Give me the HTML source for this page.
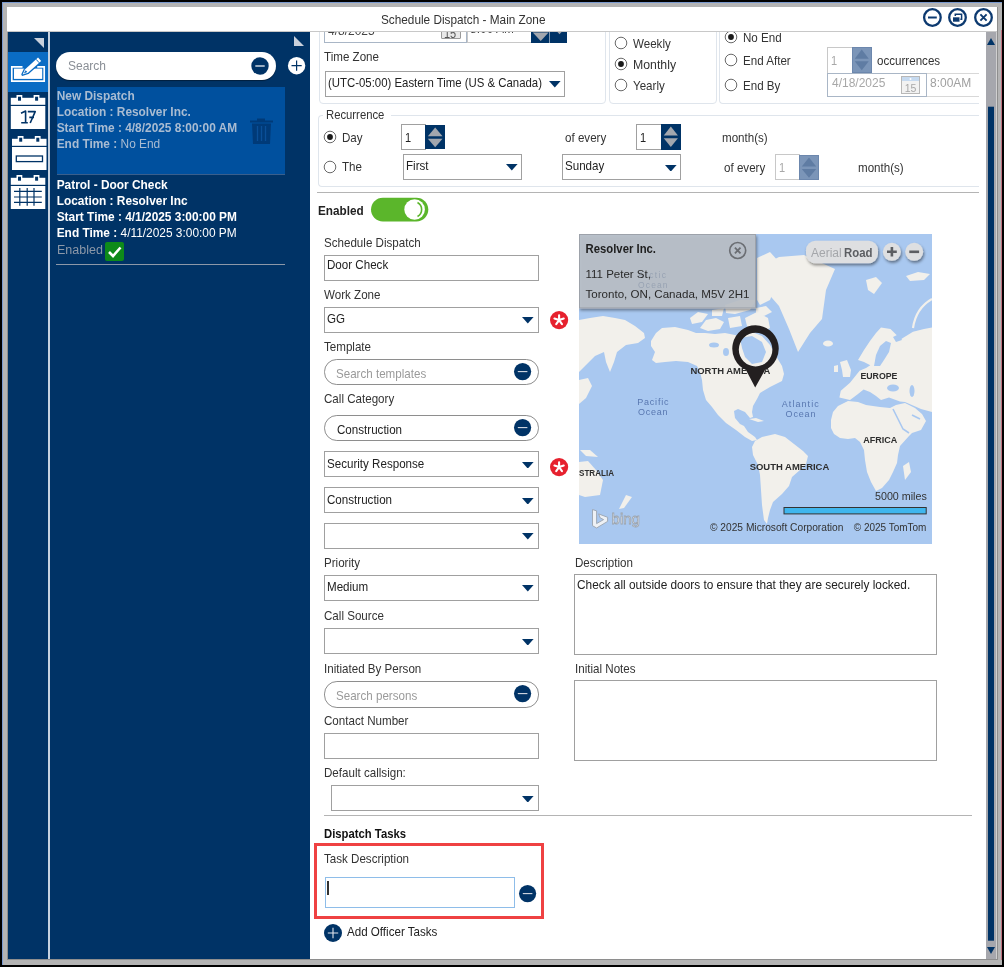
<!DOCTYPE html>
<html><head><meta charset="utf-8">
<style>
*{margin:0;padding:0;box-sizing:border-box}
html,body{width:1004px;height:967px;overflow:hidden;background:#000;will-change:transform;font-family:"Liberation Sans",sans-serif;font-size:12px;color:#222}
.a{position:absolute}
.t{line-height:1;white-space:nowrap}
#frame{left:2px;top:2px;width:1000px;height:963px;background:#b4b4b4;border-top:1px solid #7a9ad0;border-left:1px solid #7a9ad0}
#title{left:7px;top:7px;width:990px;height:25px;background:#fff;border-bottom:1px solid #c8c8c8}
#side{left:8px;top:32px;width:40px;height:927px;background:#003366}
#sep{left:48px;top:32px;width:1.6px;height:927px;background:#c6d2e0}
#list{left:50px;top:32px;width:260px;height:927px;background:#003366}
#content{left:310px;top:32px;width:676px;height:927px;background:#fff;overflow:hidden}
#sb{left:986px;top:32px;width:10px;height:927px;background:#a6a7ad}
#sbl{left:996px;top:32px;width:1px;height:927px;background:#d0d0d0}
.li{font-size:11.9px;line-height:16px;white-space:nowrap}
</style></head><body>
<div id="frame" class="a"></div>
<div class="a" style="left:1001px;top:30px;width:1px;height:930px;background:#c0707e"></div>
<div class="a" style="left:6.5px;top:6.5px;width:991px;height:953px;border:1px solid #8e8e8e"></div>
<div id="title" class="a"></div>
<div class="a t" style="left:381.4px;top:13px;font-size:12.98px;color:#333;transform:scaleX(0.909);transform-origin:0 0">Schedule Dispatch - Main Zone</div>
<svg class="a" style="left:920px;top:7px" width="78" height="24" viewBox="920 7 78 24">
<g fill="none" stroke="#0d3a70" stroke-width="2.3">
<circle cx="932.4" cy="17.5" r="8.3"/><circle cx="957.5" cy="17.5" r="8.3"/><circle cx="983.5" cy="17.5" r="8.3"/>
</g>
<path d="M928,17.5H936.8" stroke="#0d3a70" stroke-width="2"/>
<rect x="953" y="17.3" width="6.5" height="4.4" fill="#0d3a70"/>
<path d="M955.3,16V14.2H961.6V19.2H960.3" fill="none" stroke="#0d3a70" stroke-width="1.5"/>
<path d="M980.4,14.4L986.6,20.6M986.6,14.4L980.4,20.6" stroke="#0d3a70" stroke-width="1.9"/>
</svg>
<div id="side" class="a">
<svg class="a" style="left:0;top:0" width="40" height="180" viewBox="8 32 40 180">
<polygon points="34,38 44,38 44,48" fill="#c9d1dc"/>
<rect x="8" y="52" width="40" height="40" fill="#0a6cc4"/>
<path d="M22.5,66.8 H11.8 V81.1 H44.2 V66.8 H37.2" fill="none" stroke="#fff" stroke-width="1.7"/>
<rect x="14" y="68.6" width="28.2" height="10.3" fill="#fff"/>
<polygon points="22.60,74.60 28.00,72.83 41.14,61.01 38.06,57.59 24.93,69.41" fill="#0a6cc4" stroke="#0a6cc4" stroke-width="2.6" stroke-linejoin="round"/>
<polygon points="22.60,74.60 28.00,72.83 41.14,61.01 38.06,57.59 24.93,69.41" fill="#fff"/>
<path d="M39.21,62.75 L36.13,59.33" stroke="#0a6cc4" stroke-width="1"/>
<polygon points="23.79,73.53 27.27,72.01 25.66,70.23" fill="#0a6cc4"/>
<!-- cal 17 --><rect x="10.8" y="97.8" width="34.5" height="7" fill="#fff"/><rect x="16.5" y="95" width="5.8" height="4" fill="#fff"/><rect x="33.6" y="95" width="5.8" height="4" fill="#fff"/><rect x="18.0" y="96.7" width="3" height="4" fill="#003366"/><rect x="35.1" y="96.7" width="3" height="4" fill="#003366"/><rect x="10.8" y="106" width="34.5" height="23" fill="#fff"/><path d="M21,113.2 L25.6,111 V122.8 M21.2,122.8 H27.8 M27.8,111.6 H35.2 L30.2,123 M29.3,117.4 H34" fill="none" stroke="#003366" stroke-width="1.6" stroke-linejoin="round"/>
<!-- cal bar --><rect x="12" y="138.8" width="34.5" height="7" fill="#fff"/><rect x="17.7" y="136" width="5.8" height="4" fill="#fff"/><rect x="34.8" y="136" width="5.8" height="4" fill="#fff"/><rect x="19.2" y="137.7" width="3" height="4" fill="#003366"/><rect x="36.3" y="137.7" width="3" height="4" fill="#003366"/><rect x="12" y="147" width="34.5" height="23" fill="#fff"/><rect x="16.3" y="156" width="26.2" height="5.6" fill="none" stroke="#003366" stroke-width="1.3"/>
<!-- cal grid --><rect x="10.8" y="177.8" width="34.5" height="7" fill="#fff"/><rect x="16.5" y="175" width="5.8" height="4" fill="#fff"/><rect x="33.6" y="175" width="5.8" height="4" fill="#fff"/><rect x="18.0" y="176.7" width="3" height="4" fill="#003366"/><rect x="35.1" y="176.7" width="3" height="4" fill="#003366"/><rect x="10.8" y="186" width="34.5" height="23" fill="#fff"/><path d="M14,191.4H41.8M14,197H41.8M14,202.3H41.8M19.8,188V205.7M27.2,188V205.7M34,188V205.7" stroke="#003366" stroke-width="1.2"/>
</svg>
</div>
<div id="sep" class="a"></div>
<div id="list" class="a">
<svg class="a" style="left:0;top:0" width="260" height="60" viewBox="50 32 260 60">
<polygon points="294,36 294,46 304,46" fill="#c9d1dc"/>
<circle cx="296.6" cy="65.7" r="8.7" fill="#fff"/>
<path d="M291.5,65.7H301.7M296.6,60.6V70.8" stroke="#003366" stroke-width="1.2"/>
</svg>
<div class="a" style="left:6px;top:20px;width:219.5px;height:28px;background:#fff;border-radius:14px;box-shadow:0 1px 1px rgba(0,0,0,.4)"></div>
<div class="a" style="left:18px;top:27px;font-size:12px;color:#8a8f96">Search</div>
<svg class="a" style="left:201px;top:25px" width="18" height="18" viewBox="0 0 18 18"><circle cx="9" cy="9" r="8.7" fill="#003366"/><path d="M4.3,9H13.7" stroke="#fff" stroke-width="1.2"/></svg>
<div class="a" style="left:6.6px;top:55px;width:228.6px;height:88px;background:#00509e;border-bottom:1px solid #3a5f8c"></div>
<div class="a li" style="left:6.7px;top:56.3px;color:#a9bcd2">
<b>New Dispatch</b><br><b>Location : Resolver Inc.</b><br><b>Start Time : 4/8/2025 8:00:00 AM</b><br><b>End Time :</b> No End
</div>
<svg class="a" style="left:199px;top:85px" width="25" height="28" viewBox="0 0 25 28">
<path d="M8,1.5H16V3.5H8Z M1,3.5H24V5.5H1Z" fill="#003a78"/>
<path d="M3,6.5H22L21,27H4Z" fill="#003a78"/>
<path d="M8.5,9V24M12.5,9V24M16.5,9V24" stroke="#0a4f98" stroke-width="1.3"/>
</svg>
<div class="a li" style="left:6.7px;top:145px;color:#fff">
<b>Patrol - Door Check</b><br><b>Location : Resolver Inc</b><br><b>Start Time : 4/1/2025 3:00:00 PM</b><br><b>End Time :</b> 4/11/2025 3:00:00 PM
</div>
<div class="a" style="left:7px;top:211.5px;color:#8c98a8;font-size:12.5px;line-height:1">Enabled</div>
<div class="a" style="left:55px;top:210px;width:19px;height:19px;background:#0e8a1a;border-radius:2px"></div>
<svg class="a" style="left:55px;top:210px" width="19" height="19" viewBox="0 0 19 19"><path d="M4,10 L8,14 L15.5,5.5" fill="none" stroke="#fff" stroke-width="2.6"/></svg>
<div class="a" style="left:6px;top:232px;width:229px;height:1px;background:#8c98a8"></div>
</div>

<div id="content" class="a"><div class="a" style="left:-310px;top:-32px;width:1004px;height:967px">
<div class="a" style="left:319.00px;top:9.70px;width:287.00px;height:94.30px;border:1px solid #dfe5ec;background:#fff;border-radius:4px"></div>
<div class="a" style="left:609.00px;top:9.70px;width:107.50px;height:94.30px;border:1px solid #dfe5ec;background:#fff;border-radius:4px"></div>
<div class="a" style="left:719.00px;top:9.70px;width:260.00px;height:94.30px;border:1px solid #dfe5ec;background:#fff;border-radius:4px 0 0 4px;border-right:none"></div>
<div class="a" style="left:323.50px;top:13.70px;width:143.00px;height:29.80px;border:1px solid #a9b6c6;background:#fff;"></div>
<div class="a t" style="left:327.60px;top:24.00px;font-size:13.20px;color:#444;transform:scaleX(0.9091);transform-origin:0 0;">4/8/2025</div>
<div class="a" style="left:441.00px;top:23.70px;width:20.00px;height:15.80px;border:1px solid #9a9a9a;background:#e9e9e9;border-radius:1px"></div>
<div class="a t" style="left:444.00px;top:27.50px;font-size:12.10px;color:#555;transform:scaleX(0.9091);transform-origin:0 0;">15</div>
<div class="a" style="left:466.50px;top:13.70px;width:65.00px;height:29.80px;border:1px solid #c8c8c8;background:#fff;"></div>
<div class="a t" style="left:470.00px;top:21.50px;font-size:13.20px;color:#444;transform:scaleX(0.9091);transform-origin:0 0;">8:00 AM</div>
<div class="a" style="left:531.00px;top:14.00px;width:35.50px;height:29.00px;background:#003366;"></div>
<svg class="a" style="left:531px;top:28px" width="36" height="15" viewBox="531 28 36 15"><polygon points="532.8,32.6 548.6,32.6 540.7,41" fill="#a3a7ae"/><polygon points="553,27 566,27 559.5,34.3" fill="#a3a7ae"/></svg>
<div class="a" style="left:548.50px;top:14.00px;width:1.00px;height:29.00px;background:#ffffff;opacity:.5"></div>
<div class="a t" style="left:323.70px;top:51.40px;font-size:12.76px;color:#333;transform:scaleX(0.9091);transform-origin:0 0;">Time Zone</div>
<div class="a" style="left:325.00px;top:70.70px;width:239.50px;height:26.10px;border:1px solid #a0a0a0;background:#fff;"></div>
<div class="a t" style="left:328.00px;top:77.20px;font-size:12.54px;color:#222;transform:scaleX(0.9091);transform-origin:0 0;">(UTC-05:00) Eastern Time (US &amp; Canada)</div>
<svg class="a" style="left:549.00px;top:81.25px" width="11.60" height="6.60" viewBox="0 0 10 6" preserveAspectRatio="none"><polygon points="0,0 10,0 5,6" fill="#003366"/></svg>
<svg class="a" style="left:612.70px;top:35.00px" width="16" height="16" viewBox="-8 -8 16 16"><circle r="5.8" fill="#fff" stroke="#6a6a6a" stroke-width="1"/></svg>
<div class="a t" style="left:633.20px;top:37.50px;font-size:12.76px;color:#333;transform:scaleX(0.9091);transform-origin:0 0;">Weekly</div>
<svg class="a" style="left:612.70px;top:55.90px" width="16" height="16" viewBox="-8 -8 16 16"><circle r="5.8" fill="#fff" stroke="#6a6a6a" stroke-width="1"/><circle r="2.9" fill="#1a1a1a"/></svg>
<div class="a t" style="left:633.20px;top:57.80px;font-size:13.53px;color:#333;transform:scaleX(0.9091);transform-origin:0 0;">Monthly</div>
<svg class="a" style="left:612.70px;top:76.80px" width="16" height="16" viewBox="-8 -8 16 16"><circle r="5.8" fill="#fff" stroke="#6a6a6a" stroke-width="1"/></svg>
<div class="a t" style="left:633.20px;top:79.60px;font-size:12.76px;color:#333;transform:scaleX(0.9091);transform-origin:0 0;">Yearly</div>
<svg class="a" style="left:722.90px;top:29.00px" width="16" height="16" viewBox="-8 -8 16 16"><circle r="5.8" fill="#fff" stroke="#6a6a6a" stroke-width="1"/><circle r="2.9" fill="#1a1a1a"/></svg>
<div class="a t" style="left:743.40px;top:31.50px;font-size:12.76px;color:#333;transform:scaleX(0.9091);transform-origin:0 0;">No End</div>
<svg class="a" style="left:722.90px;top:51.80px" width="16" height="16" viewBox="-8 -8 16 16"><circle r="5.8" fill="#fff" stroke="#6a6a6a" stroke-width="1"/></svg>
<div class="a t" style="left:743.40px;top:54.50px;font-size:12.76px;color:#333;transform:scaleX(0.9091);transform-origin:0 0;">End After</div>
<svg class="a" style="left:722.90px;top:77.00px" width="16" height="16" viewBox="-8 -8 16 16"><circle r="5.8" fill="#fff" stroke="#6a6a6a" stroke-width="1"/></svg>
<div class="a t" style="left:743.40px;top:79.70px;font-size:12.76px;color:#333;transform:scaleX(0.9091);transform-origin:0 0;">End By</div>
<div class="a" style="left:827.40px;top:47.00px;width:25.80px;height:26.70px;border:1px solid #c8c8c8;background:#fff;"></div>
<div class="a t" style="left:831.40px;top:55.05px;font-size:12.10px;color:#a8a8a8;transform:scaleX(0.9091);transform-origin:0 0;">1</div>
<div class="a" style="left:852.20px;top:47.30px;width:19.50px;height:25.90px;background:#7b95b8;border:1px solid #6c87ad"></div>
<svg class="a" style="left:852.20px;top:47.30px" width="19.50" height="25.90" viewBox="0 0 19.50 25.90"><polygon points="2.73,11.66 16.77,11.66 9.75,2.59" fill="#5f7ca3"/><polygon points="2.73,14.25 16.77,14.25 9.75,23.31" fill="#5f7ca3"/></svg>
<div class="a t" style="left:877.30px;top:55.40px;font-size:12.76px;color:#333;transform:scaleX(0.9091);transform-origin:0 0;">occurrences</div>
<div class="a" style="left:827.40px;top:72.90px;width:100.10px;height:24.60px;border:1px solid #a9b6c6;background:#fff;"></div>
<div class="a t" style="left:832.00px;top:76.40px;font-size:13.20px;color:#a8a8a8;transform:scaleX(0.9091);transform-origin:0 0;">4/18/2025</div>
<svg class="a" style="left:901px;top:76px" width="19" height="18" viewBox="0 0 19 18"><rect x=".5" y=".5" width="18" height="17" fill="#f2f2f2" stroke="#b8b8b8"/><rect x="1" y="1" width="17" height="4" fill="#c6daf0"/><circle cx="9.5" cy="3" r="1" fill="#fff"/><text x="9.5" y="15.8" font-size="10.5" fill="#a8a8a8" text-anchor="middle" font-family="Liberation Sans">15</text></svg>
<div class="a" style="left:927.00px;top:72.90px;width:52.00px;height:24.60px;border:1px solid #d8d8d8;background:#fff;border-left:none;border-right:none"></div>
<div class="a t" style="left:929.70px;top:76.00px;font-size:13.20px;color:#a0a0a0;transform:scaleX(0.9091);transform-origin:0 0;">8:00AM</div>
<div class="a" style="left:318.30px;top:114.60px;width:660.70px;height:72.20px;border:1px solid #dfe5ec;background:#fff;border-radius:4px 0 0 4px;border-right:none"></div>
<div class="a" style="left:323.00px;top:106.00px;width:68.00px;height:16.00px;background:#fff;"></div>
<div class="a t" style="left:326.40px;top:108.60px;font-size:12.43px;color:#333;transform:scaleX(0.9091);transform-origin:0 0;">Recurrence</div>
<svg class="a" style="left:322.20px;top:129.20px" width="16" height="16" viewBox="-8 -8 16 16"><circle r="5.8" fill="#fff" stroke="#6a6a6a" stroke-width="1"/><circle r="2.9" fill="#1a1a1a"/></svg>
<div class="a t" style="left:342.40px;top:131.60px;font-size:12.76px;color:#333;transform:scaleX(0.9091);transform-origin:0 0;">Day</div>
<svg class="a" style="left:322.20px;top:158.80px" width="16" height="16" viewBox="-8 -8 16 16"><circle r="5.8" fill="#fff" stroke="#6a6a6a" stroke-width="1"/></svg>
<div class="a t" style="left:342.40px;top:161.20px;font-size:12.76px;color:#333;transform:scaleX(0.9091);transform-origin:0 0;">The</div>
<div class="a" style="left:401.00px;top:124.20px;width:25.00px;height:25.60px;border:1px solid #a0a0a0;background:#fff;"></div>
<div class="a t" style="left:405.00px;top:131.70px;font-size:12.10px;color:#222;transform:scaleX(0.9091);transform-origin:0 0;">1</div>
<div class="a" style="left:425.00px;top:124.50px;width:20.40px;height:24.80px;background:#003366;"></div>
<svg class="a" style="left:425.00px;top:124.50px" width="20.40" height="24.80" viewBox="0 0 20.40 24.80"><polygon points="2.86,11.16 17.54,11.16 10.20,2.48" fill="#a3a7ae"/><polygon points="2.86,13.64 17.54,13.64 10.20,22.32" fill="#a3a7ae"/></svg>
<div class="a t" style="left:565.20px;top:131.80px;font-size:12.76px;color:#333;transform:scaleX(0.9091);transform-origin:0 0;">of every</div>
<div class="a" style="left:636.40px;top:123.90px;width:25.80px;height:26.50px;border:1px solid #a0a0a0;background:#fff;"></div>
<div class="a t" style="left:640.40px;top:131.85px;font-size:12.10px;color:#222;transform:scaleX(0.9091);transform-origin:0 0;">1</div>
<div class="a" style="left:661.20px;top:124.20px;width:19.70px;height:25.70px;background:#003366;"></div>
<svg class="a" style="left:661.20px;top:124.20px" width="19.70" height="25.70" viewBox="0 0 19.70 25.70"><polygon points="2.76,11.57 16.94,11.57 9.85,2.57" fill="#a3a7ae"/><polygon points="2.76,14.14 16.94,14.14 9.85,23.13" fill="#a3a7ae"/></svg>
<div class="a t" style="left:722.30px;top:131.80px;font-size:12.76px;color:#333;transform:scaleX(0.9091);transform-origin:0 0;">month(s)</div>
<div class="a" style="left:403.10px;top:154.00px;width:119.40px;height:25.80px;border:1px solid #a0a0a0;background:#fff;"></div>
<div class="a t" style="left:406.10px;top:159.70px;font-size:12.76px;color:#222;transform:scaleX(0.9091);transform-origin:0 0;">First</div>
<svg class="a" style="left:506.00px;top:164.40px" width="11.60" height="6.60" viewBox="0 0 10 6" preserveAspectRatio="none"><polygon points="0,0 10,0 5,6" fill="#003366"/></svg>
<div class="a" style="left:561.90px;top:154.20px;width:119.40px;height:26.00px;border:1px solid #a0a0a0;background:#fff;"></div>
<div class="a t" style="left:564.90px;top:160.00px;font-size:12.76px;color:#222;transform:scaleX(0.9091);transform-origin:0 0;">Sunday</div>
<svg class="a" style="left:665.30px;top:164.70px" width="11.60" height="6.60" viewBox="0 0 10 6" preserveAspectRatio="none"><polygon points="0,0 10,0 5,6" fill="#003366"/></svg>
<div class="a t" style="left:724.00px;top:161.60px;font-size:12.76px;color:#333;transform:scaleX(0.9091);transform-origin:0 0;">of every</div>
<div class="a" style="left:774.50px;top:154.20px;width:25.50px;height:26.10px;border:1px solid #c8c8c8;background:#fff;"></div>
<div class="a t" style="left:778.50px;top:161.95px;font-size:12.10px;color:#a8a8a8;transform:scaleX(0.9091);transform-origin:0 0;">1</div>
<div class="a" style="left:799.00px;top:154.50px;width:20.00px;height:25.30px;background:#7b95b8;border:1px solid #6c87ad"></div>
<svg class="a" style="left:799.00px;top:154.50px" width="20.00" height="25.30" viewBox="0 0 20.00 25.30"><polygon points="2.80,11.39 17.20,11.39 10.00,2.53" fill="#5f7ca3"/><polygon points="2.80,13.92 17.20,13.92 10.00,22.77" fill="#5f7ca3"/></svg>
<div class="a t" style="left:857.80px;top:162.00px;font-size:12.76px;color:#333;transform:scaleX(0.9091);transform-origin:0 0;">month(s)</div>
<div class="a" style="left:317.00px;top:191.90px;width:662.00px;height:1.10px;background:#b4b4b4;"></div>
<div class="a t" style="left:317.70px;top:204.80px;font-size:12.93px;color:#222;font-weight:bold;transform:scaleX(0.9091);transform-origin:0 0;">Enabled</div>
<svg class="a" style="left:370px;top:197px" width="60" height="26" viewBox="0 0 60 26"><rect x="1" y=".7" width="57.3" height="23.7" rx="11.85" fill="#5bb62b"/><circle cx="44.6" cy="12.5" r="10.3" fill="#fff"/><path d="M47.5,5.5 A8,8 0 0 1 47.5,19.5" fill="none" stroke="#5bb62b" stroke-width="1.6"/></svg>
<div class="a t" style="left:324.40px;top:236.50px;font-size:12.76px;color:#333;transform:scaleX(0.9091);transform-origin:0 0;">Schedule Dispatch</div>
<div class="a" style="left:324.00px;top:254.50px;width:215.00px;height:26.60px;border:1px solid #a0a0a0;background:#fff;"></div>
<div class="a t" style="left:327.40px;top:258.80px;font-size:12.76px;color:#222;transform:scaleX(0.9091);transform-origin:0 0;">Door Check</div>
<div class="a t" style="left:324.40px;top:289.00px;font-size:12.76px;color:#333;transform:scaleX(0.9091);transform-origin:0 0;">Work Zone</div>
<div class="a" style="left:324.00px;top:306.70px;width:215.00px;height:26.20px;border:1px solid #a0a0a0;background:#fff;"></div>
<div class="a t" style="left:327.00px;top:312.80px;font-size:12.76px;color:#222;transform:scaleX(0.9091);transform-origin:0 0;">GG</div>
<svg class="a" style="left:522.10px;top:317.30px" width="11.60" height="6.60" viewBox="0 0 10 6" preserveAspectRatio="none"><polygon points="0,0 10,0 5,6" fill="#003366"/></svg>
<svg class="a" style="left:549.10px;top:310.20px" width="20.2" height="20.2" viewBox="-10.1 -10.1 20.2 20.2"><circle r="9.1" fill="#e6212e"/><path d="M0,0L0.00,-4.90M0,0L4.66,-1.51M0,0L2.88,3.96M0,0L-2.88,3.96M0,0L-4.66,-1.51" stroke="#fff" stroke-width="2.1" stroke-linecap="round"/></svg>
<div class="a t" style="left:324.40px;top:341.00px;font-size:12.76px;color:#333;transform:scaleX(0.9091);transform-origin:0 0;">Template</div>
<div class="a" style="left:324.00px;top:359.00px;width:215.00px;height:26.20px;border:1px solid #8e8e8e;background:#fff;border-radius:12.7px"></div>
<div class="a t" style="left:335.90px;top:367.80px;font-size:12.76px;color:#9a9a9a;transform:scaleX(0.9091);transform-origin:0 0;">Search templates</div>
<svg class="a" style="left:513.00px;top:362.20px" width="19.20" height="19.20" viewBox="-9.6 -9.6 19.2 19.2"><circle r="8.6" fill="#003366"/><path d="M-4.8,0H4.8" stroke="#d5dbe3" stroke-width="1.1"/></svg>
<div class="a t" style="left:324.40px;top:392.60px;font-size:12.76px;color:#333;transform:scaleX(0.9091);transform-origin:0 0;">Call Category</div>
<div class="a" style="left:324.00px;top:415.20px;width:215.00px;height:26.30px;border:1px solid #8e8e8e;background:#fff;border-radius:12.8px"></div>
<div class="a t" style="left:337.30px;top:424.40px;font-size:12.76px;color:#222;transform:scaleX(0.9091);transform-origin:0 0;">Construction</div>
<svg class="a" style="left:513.00px;top:418.45px" width="19.20" height="19.20" viewBox="-9.6 -9.6 19.2 19.2"><circle r="8.6" fill="#003366"/><path d="M-4.8,0H4.8" stroke="#d5dbe3" stroke-width="1.1"/></svg>
<div class="a" style="left:324.00px;top:451.10px;width:215.00px;height:26.20px;border:1px solid #a0a0a0;background:#fff;"></div>
<div class="a t" style="left:327.00px;top:458.00px;font-size:12.76px;color:#222;transform:scaleX(0.9091);transform-origin:0 0;">Security Response</div>
<svg class="a" style="left:522.10px;top:461.70px" width="11.60" height="6.60" viewBox="0 0 10 6" preserveAspectRatio="none"><polygon points="0,0 10,0 5,6" fill="#003366"/></svg>
<svg class="a" style="left:549.10px;top:457.10px" width="20.2" height="20.2" viewBox="-10.1 -10.1 20.2 20.2"><circle r="9.1" fill="#e6212e"/><path d="M0,0L0.00,-4.90M0,0L4.66,-1.51M0,0L2.88,3.96M0,0L-2.88,3.96M0,0L-4.66,-1.51" stroke="#fff" stroke-width="2.1" stroke-linecap="round"/></svg>
<div class="a" style="left:324.00px;top:486.90px;width:215.00px;height:26.20px;border:1px solid #a0a0a0;background:#fff;"></div>
<div class="a t" style="left:327.00px;top:493.50px;font-size:12.76px;color:#222;transform:scaleX(0.9091);transform-origin:0 0;">Construction</div>
<svg class="a" style="left:522.10px;top:497.50px" width="11.60" height="6.60" viewBox="0 0 10 6" preserveAspectRatio="none"><polygon points="0,0 10,0 5,6" fill="#003366"/></svg>
<div class="a" style="left:324.00px;top:522.70px;width:215.00px;height:26.30px;border:1px solid #a0a0a0;background:#fff;"></div>
<svg class="a" style="left:522.10px;top:533.35px" width="11.60" height="6.60" viewBox="0 0 10 6" preserveAspectRatio="none"><polygon points="0,0 10,0 5,6" fill="#003366"/></svg>
<div class="a t" style="left:324.40px;top:557.30px;font-size:12.76px;color:#333;transform:scaleX(0.9091);transform-origin:0 0;">Priority</div>
<div class="a" style="left:324.00px;top:575.10px;width:215.00px;height:25.60px;border:1px solid #a0a0a0;background:#fff;"></div>
<div class="a t" style="left:327.00px;top:581.20px;font-size:12.76px;color:#222;transform:scaleX(0.9091);transform-origin:0 0;">Medium</div>
<svg class="a" style="left:522.10px;top:585.40px" width="11.60" height="6.60" viewBox="0 0 10 6" preserveAspectRatio="none"><polygon points="0,0 10,0 5,6" fill="#003366"/></svg>
<div class="a t" style="left:324.40px;top:610.00px;font-size:12.76px;color:#333;transform:scaleX(0.9091);transform-origin:0 0;">Call Source</div>
<div class="a" style="left:324.00px;top:628.30px;width:215.00px;height:25.70px;border:1px solid #a0a0a0;background:#fff;"></div>
<svg class="a" style="left:522.10px;top:638.65px" width="11.60" height="6.60" viewBox="0 0 10 6" preserveAspectRatio="none"><polygon points="0,0 10,0 5,6" fill="#003366"/></svg>
<div class="a t" style="left:324.40px;top:662.80px;font-size:12.76px;color:#333;transform:scaleX(0.9091);transform-origin:0 0;">Initiated By Person</div>
<div class="a" style="left:324.00px;top:681.00px;width:215.00px;height:26.50px;border:1px solid #8e8e8e;background:#fff;border-radius:12.9px"></div>
<div class="a t" style="left:336.20px;top:690.20px;font-size:12.76px;color:#9a9a9a;transform:scaleX(0.9091);transform-origin:0 0;">Search persons</div>
<svg class="a" style="left:513.00px;top:684.35px" width="19.20" height="19.20" viewBox="-9.6 -9.6 19.2 19.2"><circle r="8.6" fill="#003366"/><path d="M-4.8,0H4.8" stroke="#d5dbe3" stroke-width="1.1"/></svg>
<div class="a t" style="left:324.40px;top:714.50px;font-size:12.76px;color:#333;transform:scaleX(0.9091);transform-origin:0 0;">Contact Number</div>
<div class="a" style="left:324.00px;top:733.40px;width:215.00px;height:25.50px;border:1px solid #a0a0a0;background:#fff;"></div>
<div class="a t" style="left:324.40px;top:767.00px;font-size:12.76px;color:#333;transform:scaleX(0.9091);transform-origin:0 0;">Default callsign:</div>
<div class="a" style="left:331.00px;top:785.10px;width:208.00px;height:26.20px;border:1px solid #a0a0a0;background:#fff;"></div>
<svg class="a" style="left:522.10px;top:795.70px" width="11.60" height="6.60" viewBox="0 0 10 6" preserveAspectRatio="none"><polygon points="0,0 10,0 5,6" fill="#003366"/></svg>
<div class="a" style="left:324.00px;top:814.70px;width:648.00px;height:1.30px;background:#b4b4b4;"></div>
<div class="a t" style="left:324.40px;top:827.80px;font-size:12.43px;color:#111;font-weight:bold;transform:scaleX(0.9091);transform-origin:0 0;">Dispatch Tasks</div>
<div class="a" style="left:314px;top:843px;width:229.5px;height:76px;border:3px solid #ef4142"></div>
<div class="a t" style="left:324.40px;top:853.20px;font-size:12.76px;color:#333;transform:scaleX(0.9091);transform-origin:0 0;">Task Description</div>
<div class="a" style="left:325.40px;top:877.40px;width:190.00px;height:30.30px;border:1px solid #8ebde9;background:#fff;"></div>
<div class="a" style="left:327.30px;top:880.50px;width:1.80px;height:14.00px;background:#333;"></div>
<svg class="a" style="left:518.00px;top:884.00px" width="19.20" height="19.20" viewBox="-9.6 -9.6 19.2 19.2"><circle r="8.6" fill="#003366"/><path d="M-4.8,0H4.8" stroke="#d5dbe3" stroke-width="1.1"/></svg>
<svg class="a" style="left:323.10px;top:922.50px" width="20.00" height="20.00" viewBox="-10 -10 20 20"><circle r="9" fill="#003366"/><path d="M-5.2,0H5.2M0,-5.2V5.2" stroke="#e2e6ec" stroke-width="1.1"/></svg>
<div class="a t" style="left:347.30px;top:926.00px;font-size:12.76px;color:#222;transform:scaleX(0.9091);transform-origin:0 0;">Add Officer Tasks</div>
<div class="a t" style="left:574.60px;top:556.50px;font-size:12.76px;color:#333;transform:scaleX(0.9091);transform-origin:0 0;">Description</div>
<div class="a" style="left:574.20px;top:574.20px;width:363.10px;height:81.30px;border:1px solid #a0a0a0;background:#fff;"></div>
<div class="a t" style="left:577.00px;top:578.40px;font-size:13.04px;color:#222;transform:scaleX(0.9091);transform-origin:0 0;">Check all outside doors to ensure that they are securely locked.</div>
<div class="a t" style="left:574.60px;top:662.70px;font-size:12.76px;color:#333;transform:scaleX(0.9091);transform-origin:0 0;">Initial Notes</div>
<div class="a" style="left:574.20px;top:680.30px;width:363.10px;height:80.50px;border:1px solid #a0a0a0;background:#fff;"></div>
<svg class="a" style="left:579px;top:234px" width="353" height="310" viewBox="579 234 353 310">
<defs>
<filter id="sh" x="-10%" y="-10%" width="130%" height="140%"><feDropShadow dx="1" dy="2" stdDeviation="1.6" flood-opacity=".45"/></filter>
</defs>
<rect x="579" y="234" width="353" height="310" fill="#a9c8f0"/>
<g fill="#f2f0eb">
<!-- Asia east -->
<path d="M579,320 L590,318 L603,316 L615,318 L625,320 L635,326 L644,333 L645,338 L638,343 L626,345 L617,352 L614,362 L610,372 L606,362 L604,352 L595,356 L586,365 L579,372 Z"/>
<path d="M579,380 L588,378 L592,386 L586,398 L579,404 Z"/>
<!-- North America -->
<path d="M651,341 L656,333 L662,328 L675,327 L688,330 L696,333 L705,333 L715,334 L725,333 L735,335 L740,337 L752,332 L762,336 L770,345 L776,356 L782,366 L784,374 L782,381 L770,387 L760,393 L757,399 L753,406 L752,412 L753,417 L750,418 L745,412 L738,409 L734,411 L735,418 L740,424 L744,426 L748,432 L755,437 L757,440 L752,441 L745,437 L736,430 L726,423 L718,415 L712,407 L706,400 L703,390 L702,380 L700,372 L697,366 L688,362 L676,361 L665,362 L656,363 L652,360 L655,352 L651,346 Z"/>
<path d="M700,328 L706,320 L716,318 L724,322 L720,329 L708,331 Z"/>
<path d="M745,318 L757,312 L768,318 L770,328 L760,333 L748,330 Z"/>
<path d="M725,305 L740,300 L756,300 L750,310 L735,314 L726,313 Z"/>
<path d="M728,318 L740,316 L742,326 L730,328 Z"/>
<path d="M690,318 L698,312 L708,314 L702,322 L692,324 Z"/>
<path d="M712,310 L724,308 L722,316 L712,316 Z"/>
<path d="M756,308 L766,306 L772,312 L764,316 L756,314 Z"/>
<path d="M757,258 L770,252 L779,262 L776,285 L770,300 L760,305 L757,300 Z"/>
<path d="M749,419 L756,418 L764,421 L758,422 Z"/>
<!-- Greenland -->
<path d="M763,265 L779,257 L804,255 L835,269 L826,290 L822,319 L810,333 L798,352 L789,329 L779,306 L765,290 Z"/>
<ellipse cx="828" cy="343.5" rx="5" ry="3"/>
<path d="M866,280 L876,277 L882,283 L874,294 L868,290 Z"/>
<path d="M906,276 L918,272 L930,274 L924,280 L910,281 Z"/>
<!-- Europe / Russia -->
<path d="M858,360 L864,350 L870,341 L876,333 L881,327.6 L890.5,329 L898.6,337 L900,339.7 L913,331.7 L924,329 L932,327.6 L932,412 L921,409 L905,402 L900,401.6 L889,397.5 L881,400 L876,396 L870,392 L863.6,389.5 L858,394 L850,400 L839.4,397.5 L840.8,390.8 L850,382.8 L859.6,370.7 L866,368 L870.3,365.3 L864,362 Z"/>
<path d="M913,328 Q916,308 932,299" fill="none" stroke="#f2f0eb" stroke-width="2.2"/>
<path d="M840,362 L847,360 L851,370 L850,377 L843,377 L842,370 Z"/>
<path d="M834,366 L838,365 L838,372 L834,372 Z"/>
<!-- Africa -->
<path d="M831,420 L833,412 L838,406 L848,401 L858,402 L866,405 L880,407 L890,408 L896,405 L905,403 L915,408 L922,414 L926,421 L921,430 L912,433 L909,436 L900,446 L898,455 L897,463 L893,472 L889,480 L882,488 L876,491 L871,482 L867,472 L865,460 L864,450 L860,442 L855,438 L848,439 L840,438 L834,434 L831,428 Z"/>
<path d="M903,466 L909,462 L911,472 L905,480 Z"/>
<!-- South America -->
<path d="M755,441 L762,437 L775,434 L785,437 L794,444 L803,451 L808,456 L806,464 L800,470 L792,477 L789,486 L782,494 L773,502 L770,510 L768,518 L767,524 L764,520 L762,505 L761,490 L760,475 L758,465 L753,455 L752,447 Z"/>
<!-- Australia / NG / NZ -->
<path d="M579,462 L588,461 L596,470 L603,480 L600,495 L585,497 L579,495 Z"/>
<path d="M580,450 L590,450 L598,457 L586,456 Z"/>
<path d="M626,495 L632,497 L624,508 L619,509 Z"/>
</g>
<g fill="#a9c8f0">
<path d="M740,338 L752,336 L762,342 L766,352 L762,362 L752,364 L745,357 L742,348 Z"/>
<ellipse cx="714" cy="345" rx="5" ry="2.5"/>
<ellipse cx="726" cy="352" rx="3" ry="4"/>
<path d="M874,366 L876,355 L880,346 L886,341 L891,343 L889,352 L884,360 L880,366 Z"/>
<path d="M893,337 L899,334 L902,340 L896,342 Z"/>
<ellipse cx="893" cy="388" rx="6" ry="3.5"/>
<ellipse cx="912" cy="391" rx="2.5" ry="6"/>
</g>
<path d="M893,409 L898,419 L903,429 L909,433" fill="none" stroke="#a9c8f0" stroke-width="1.6"/>
<path d="M912,415 L920,419" fill="none" stroke="#a9c8f0" stroke-width="1.6"/>
<!-- labels -->
<g font-family="Liberation Sans" font-weight="bold" fill="#2e2e2e" font-size="9.6">
<text x="690.4" y="373.7" textLength="80" lengthAdjust="spacingAndGlyphs">NORTH AMERICA</text>
<text x="860.4" y="379" textLength="37" lengthAdjust="spacingAndGlyphs">EUROPE</text>
<text x="863.3" y="442.7" textLength="34" lengthAdjust="spacingAndGlyphs">AFRICA</text>
<text x="749.7" y="469.7" textLength="79.6" lengthAdjust="spacingAndGlyphs">SOUTH AMERICA</text>
<text x="579" y="476.3" textLength="35" lengthAdjust="spacingAndGlyphs">STRALIA</text>
</g>
<g font-family="Liberation Sans" fill="#5877b0" font-size="9">
<text x="637.2" y="405" textLength="31.3" lengthAdjust="spacing">Pacific</text>
<text x="638" y="415" textLength="29.6" lengthAdjust="spacing">Ocean</text>
<text x="781.8" y="407.2" textLength="36.9" lengthAdjust="spacing">Atlantic</text>
<text x="785.6" y="416.9" textLength="29.8" lengthAdjust="spacing">Ocean</text>
</g>
<!-- pin -->
<path d="M755.5,325.3 A23.4,23.4 0 0 1 765,370 L755.2,387.5 L746,370 A23.4,23.4 0 0 1 755.5,325.3 Z M755.6,332.8 A16.8,16.8 0 1 0 755.6,366.4 A16.8,16.8 0 1 0 755.6,332.8 Z" fill="#231f20" fill-rule="evenodd"/>
<!-- scale -->
<text x="875" y="500" font-family="Liberation Sans" font-size="10.8" fill="#333" textLength="51.8" lengthAdjust="spacingAndGlyphs">5000 miles</text>
<rect x="784" y="507.5" width="142.2" height="6.4" fill="#3fb6ee" stroke="#333" stroke-width="1"/>
<text x="710" y="531.4" font-family="Liberation Sans" font-size="10.5" fill="#333" textLength="133.4" lengthAdjust="spacingAndGlyphs">© 2025 Microsoft Corporation</text>
<text x="853.8" y="531.4" font-family="Liberation Sans" font-size="10.5" fill="#333" textLength="72.6" lengthAdjust="spacingAndGlyphs">© 2025 TomTom</text>
<!-- bing -->
<g>
<path d="M592.5,509.5 L596.6,510.9 L596.6,523.6 L603.6,519.6 L600.2,517.9 L598.6,513.9 L607.6,517.3 L607.6,521.4 L596.6,528 L592.5,525.7 Z" fill="#eef1f5" stroke="#9ba4af" stroke-width=".9" stroke-linejoin="round"/>
<text x="611.5" y="524.3" font-family="Liberation Sans" font-size="15" fill="#edf0f4" stroke="#9ba4af" stroke-width=".8" textLength="28.5" lengthAdjust="spacingAndGlyphs">bing</text>
</g>
<!-- aerial road -->
<g filter="url(#sh)">
<rect x="806" y="240.7" width="72" height="22.6" rx="9.5" fill="#dedfe1"/>
<circle cx="891.9" cy="251.8" r="9" fill="#dedfe1"/>
<circle cx="914.2" cy="251.8" r="9" fill="#dedfe1"/>
</g>
<text x="811" y="256.5" font-family="Liberation Sans" font-size="12" fill="#a4a6aa">Aerial</text>
<text x="844" y="256.5" font-family="Liberation Sans" font-weight="bold" font-size="12" fill="#5c5e62" textLength="28.5" lengthAdjust="spacingAndGlyphs">Road</text>
<path d="M887,251.8H896.8M891.9,247V256.6" stroke="#5c5e62" stroke-width="2.6"/>
<path d="M909.3,251.8H919.1" stroke="#5c5e62" stroke-width="2.6"/>
<!-- info box -->
<g filter="url(#sh)">
<rect x="579" y="234" width="177" height="74.4" fill="#bcc0c7" fill-opacity=".88"/>
</g>
<rect x="579.5" y="234.5" width="176" height="73.4" fill="none" stroke="#9da2aa" stroke-width="1"/>
<text x="638" y="277.7" font-family="Liberation Sans" font-size="8.5" fill="#98a3b3" textLength="28" lengthAdjust="spacing">Arctic</text>
<text x="638" y="287.6" font-family="Liberation Sans" font-size="8.5" fill="#98a3b3" textLength="29.6" lengthAdjust="spacing">Ocean</text>
<text x="585.5" y="252.6" font-family="Liberation Sans" font-weight="bold" font-size="12.6" fill="#1e1e1e" textLength="70.5" lengthAdjust="spacingAndGlyphs">Resolver Inc.</text>
<text x="585.5" y="278.2" font-family="Liberation Sans" font-size="11.5" fill="#2a2a2a">111 Peter St,</text>
<text x="585.5" y="298" font-family="Liberation Sans" font-size="11.5" fill="#2a2a2a" textLength="164" lengthAdjust="spacingAndGlyphs">Toronto, ON, Canada, M5V 2H1</text>
<circle cx="737.7" cy="250.5" r="8" fill="none" stroke="#6b6e73" stroke-width="1.6"/>
<path d="M734.9,247.7L740.5,253.3M740.5,247.7L734.9,253.3" stroke="#6b6e73" stroke-width="1.8"/>
</svg>

</div></div>
<div id="sb" class="a"></div>
<div id="sbl" class="a"></div>
<svg class="a" style="left:986px;top:32px" width="10" height="927" viewBox="986 32 10 927">
<polygon points="987,45 995,45 991,38" fill="#003366"/>
<rect x="988" y="106.7" width="6" height="834" fill="#003366"/>
<polygon points="987,947 995,947 991,954" fill="#003366"/>
</svg>
</body></html>
